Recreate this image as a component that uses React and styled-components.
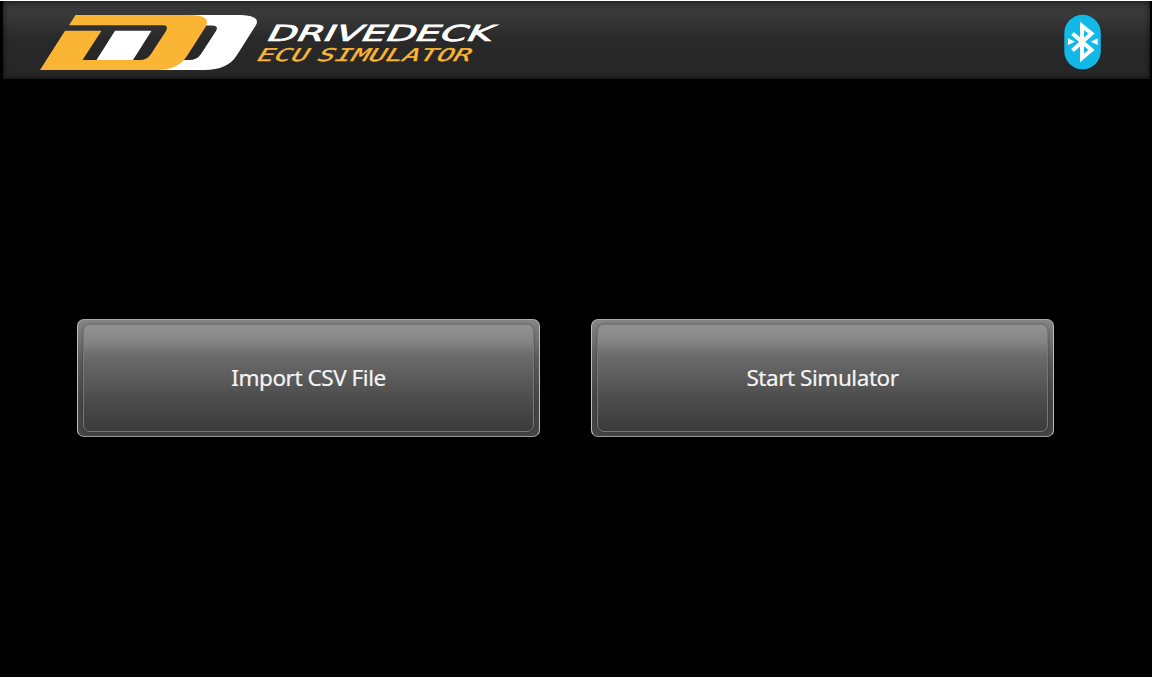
import React from "react";
import styled, { createGlobalStyle } from "styled-components";

const GlobalStyle = createGlobalStyle`
  *, *::before, *::after { box-sizing: border-box; }
  body { margin: 0; background: #fff; }
`;

const Frame = styled.div`
  width: 1154px;
  height: 679px;
  padding: 1px 2px 2px 0;
  overflow: hidden;
  background: #fff;
`;

const Screen = styled.div`
  display: flex;
  flex-direction: column;
  width: 1152px;
  height: 676px;
  background: #000;
  font-family: "Noto Sans", sans-serif;
`;

const Header = styled.header`
  display: flex;
  justify-content: space-between;
  align-items: flex-start;
  flex: none;
  height: 78px;
  margin: 0 2px 0 3px;
  padding: 13px 49px 0 36px;
  background: linear-gradient(#353535 0, #393939 14px, #343434 22px, #292929 38px, #262626 100%);
  box-shadow: inset 0 0 5px 1px rgba(0, 0, 0, 0.5);
`;

const Logo = styled.svg`
  display: block;
  width: 464px;
  height: 58px;
`;

const TitleText = styled.text`
  font: 400 22px "DejaVu Sans", sans-serif;
  fill: #fff;
  stroke: #fff;
  stroke-width: 0.7px;
`;

const SubtitleText = styled.text`
  font: 400 17.5px "DejaVu Sans Mono", monospace;
  fill: #fbb535;
  stroke: #fbb535;
  stroke-width: 0.3px;
`;

const BluetoothBadge = styled.svg`
  display: block;
  width: 37px;
  height: 56px;
`;

const Actions = styled.main`
  display: flex;
  gap: 51px;
  padding: 240px 98px 0 77px;
`;

const Button = styled.button`
  display: flex;
  flex: none;
  width: 463px;
  height: 118px;
  padding: 4px 5px;
  border: 1px solid;
  border-color: #aaa #bdbdbd #999 #bdbdbd;
  border-radius: 7px;
  background: linear-gradient(#858585, #5a5a5a 35%, #444 72%, #444);
  font: inherit;
`;

const ButtonFace = styled.span`
  display: flex;
  flex: 1;
  align-items: center;
  justify-content: center;
  border: 1px solid #777;
  border-radius: 7px;
  background: linear-gradient(#929292, #858585 15%, #6b6b6b 29%, #4c4c4c 70%, #3b3b3b);
  box-shadow: 0 0 2px rgba(0, 0, 0, 0.4);
  color: #f4f4f4;
`;

const Label = styled.span`
  font-size: 22.5px;
  line-height: 30px;
  white-space: nowrap;
  letter-spacing: -0.45px;
  -webkit-text-stroke: 0.2px #f4f4f4;
`;

function DriveDeckLogo() {
  return (
    <Logo viewBox="39 14 464 58">
      <path
        fill="#fff"
        fillRule="evenodd"
        d="M185 15H241Q261 16 256 25L237 55Q228 70 204 70H150L184 60H189Q197 60 201 54L216 31Q219 25.5 212 25.5H190Z"
      />
      <path
        fill="#fbb535"
        d="M75.500 15H190Q212 15 205.500 27L187 56Q178 70 157 70H40L65 30.800H101.500L82.500 60H140Q147 60 151 54L166 31Q169 25.200 163 25.200H69Z"
      />
      <path fill="#fff" d="M115 30.800H151.500L133 60H96.500Z" />
      <TitleText
        transform="translate(264.500 41) skewX(-28)"
        textLength="225"
        lengthAdjust="spacingAndGlyphs"
      >
        DRIVEDECK
      </TitleText>
      <SubtitleText
        transform="translate(254.500 61) skewX(-32)"
        textLength="51"
        lengthAdjust="spacingAndGlyphs"
      >
        ECU
      </SubtitleText>
      <SubtitleText
        transform="translate(315 61) skewX(-32)"
        textLength="153"
        lengthAdjust="spacingAndGlyphs"
      >
        SIMULATOR
      </SubtitleText>
    </Logo>
  );
}

function BluetoothIcon() {
  return (
    <BluetoothBadge viewBox="1064 14 37 56">
      <rect x="1064.300" y="14.800" width="36.500" height="54.500" rx="18.200" fill="#12b9e8" />
      <path
        d="M1072.500 33.500L1091.500 50L1082 58V26L1091.500 33.500L1072.500 50.500"
        fill="none"
        stroke="#fff"
        strokeWidth="4"
      />
      <path fill="#fff" d="M1068 38.300L1075 41.700L1068 45ZM1097.700 38.300L1090.700 41.700L1097.700 45Z" />
    </BluetoothBadge>
  );
}

export default function App() {
  return (
    <>
      <GlobalStyle />
      <Frame>
        <Screen>
          <Header>
            <DriveDeckLogo />
            <BluetoothIcon />
          </Header>
          <Actions>
            <Button>
              <ButtonFace>
                <Label>Import CSV File</Label>
              </ButtonFace>
            </Button>
            <Button>
              <ButtonFace>
                <Label>Start Simulator</Label>
              </ButtonFace>
            </Button>
          </Actions>
        </Screen>
      </Frame>
    </>
  );
}
